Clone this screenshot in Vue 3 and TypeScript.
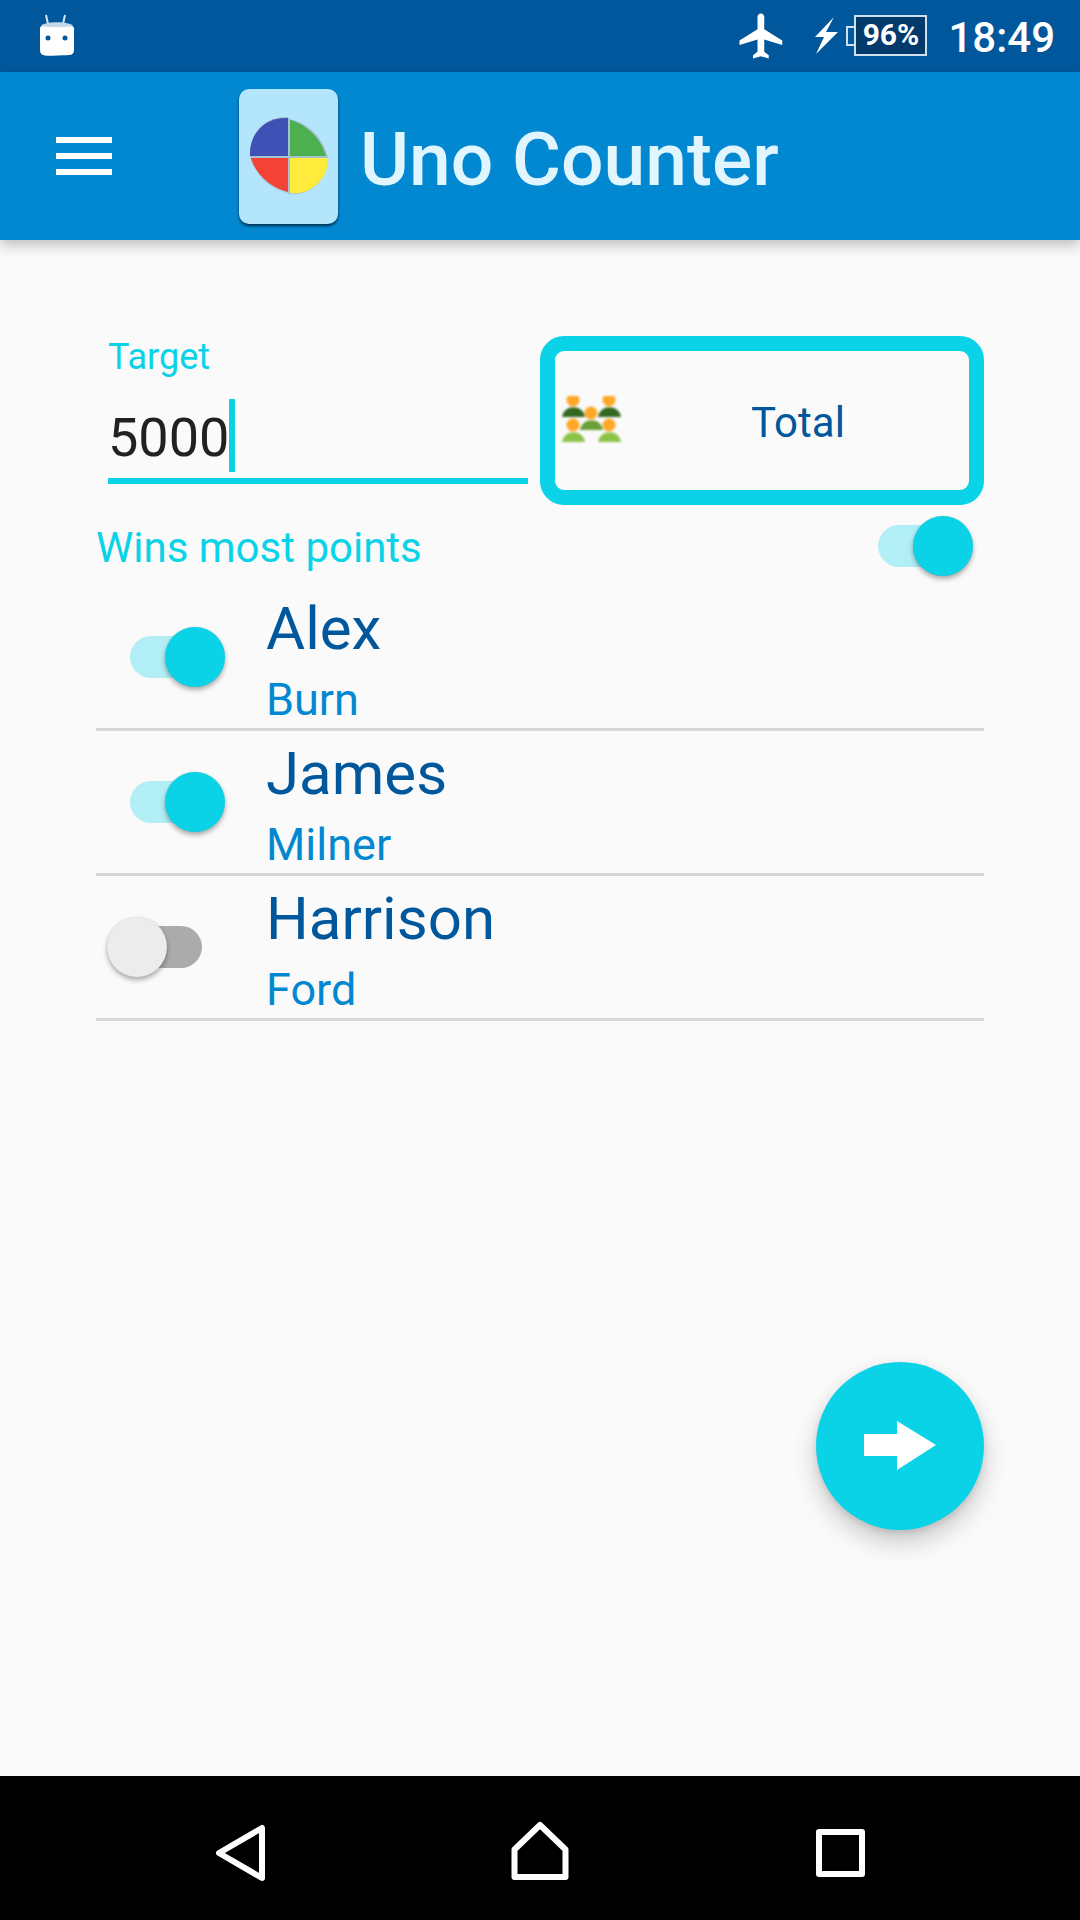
<script setup lang="ts">
interface Player {
  first: string
  last: string
  on: boolean
}

const players: Player[] = [
  { first: 'Alex', last: 'Burn', on: true },
  { first: 'James', last: 'Milner', on: true },
  { first: 'Harrison', last: 'Ford', on: false },
]
</script>

<template>
  <div class="screen">
    <header class="status">
      <svg class="robot" width="40" height="46" viewBox="37 12 40 46" aria-hidden="true">
        <path d="M46 13l2 9M65 13l-2 9" stroke="#fff" stroke-width="2" fill="none" opacity=".85" />
        <path d="M40 26c0-5 34-5 34 0v21c0 7-3 6-17 6.500s-17 .5-17-6.500z" fill="#fff" />
        <path d="M41 24c3-5 29-5 32 0-1 1.500-30 1.500-32 0z" fill="#c5d8e8" />
        <circle cx="48" cy="36" r="2.500" fill="#01579b" />
        <circle cx="65" cy="36" r="2.500" fill="#01579b" />
      </svg>
      <div class="status-right">
        <svg class="plane" width="54" height="54" viewBox="0 0 24 24" aria-hidden="true">
          <path fill="#fff" d="M21 16v-2l-8-5V3.500c0-.83-.67-1.500-1.500-1.500S10 2.670 10 3.500V9l-8 5v2l8-2.500V19l-2 1.500V22l3.500-1 3.500 1v-1.500L13 19v-5.500l8 2.500z" />
        </svg>
        <svg class="bolt" width="23" height="37" viewBox="816 17 23 37" aria-hidden="true">
          <path fill="#fff" d="M835 17l-19 20h9l-8 17 22-22h-12z" />
        </svg>
        <div class="battery">
          <span class="battery-tip"></span>
          <span class="battery-body">96%</span>
        </div>
        <span class="clock">18:49</span>
      </div>
    </header>

    <div class="appbar">
      <div class="burger"><i></i><i></i><i></i></div>
      <div class="logo">
        <svg width="99" height="135" viewBox="238 89 99 135" aria-hidden="true">
          <path d="M287 117c-25-1-39 18-38 40 5 18 20 32 38 36 1 2 2 2 2 1 22 2 39-17 38-37-5-20-20-34-38-38z" fill="#9fb4c2" opacity=".7" />
          <path fill="#3f51b5" d="M287 118v38h-38c-1-21 13-39 38-38z" />
          <path fill="#4caf50" d="M289 120c16 4 31 18 36 36h-36z" />
          <path fill="#f44336" d="M250 158h37v34c-17-4-32-17-37-34z" />
          <path fill="#ffeb3b" d="M289 158h38c1 20-17 38-38 35z" />
        </svg>
      </div>
      <h1 class="title">Uno Counter</h1>
    </div>

    <main class="content">
      <section class="top">
        <div class="field">
          <label class="field-label">Target</label>
          <div class="field-value">5000<span class="caret"></span></div>
        </div>
        <button class="total" type="button">
          <svg class="people" width="66" height="54" viewBox="558 398 66 54" aria-hidden="true">
            <circle cx="573" cy="402" r="6.500" fill="#ffa726" />
            <circle cx="609" cy="402" r="6.500" fill="#ffa726" />
            <path d="M562 419c2-13 21-13 23 0z" fill="#33691e" />
            <path d="M598 419c2-13 21-13 23 0z" fill="#33691e" />
            <circle cx="591" cy="415" r="6.500" fill="#ffa726" />
            <path d="M580 432c2-13 21-13 23 0z" fill="#689f38" />
            <circle cx="573" cy="427" r="6.500" fill="#ffa726" />
            <circle cx="609" cy="427" r="6.500" fill="#ffa726" />
            <path d="M562 444c2-13 21-13 23 0z" fill="#8bc34a" />
            <path d="M598 444c2-13 21-13 23 0z" fill="#8bc34a" />
          </svg>
          <span class="total-text">Total</span>
        </button>
      </section>

      <div class="wins">
        <span class="wins-text">Wins most points</span>
        <span class="switch on"><i class="knob"></i></span>
      </div>

      <div v-for="p in players" :key="p.first" class="player">
        <span class="switch" :class="{ on: p.on }"><i class="knob"></i></span>
        <div class="names">
          <div class="first">{{ p.first }}</div>
          <div class="last">{{ p.last }}</div>
        </div>
      </div>

      <button class="fab" type="button" aria-label="Next">
        <svg width="72" height="50" viewBox="864 1422 72 50" aria-hidden="true">
          <path fill="#fff" d="M864 1435h33v-13l39 24-39 25v-14h-33z" />
        </svg>
      </button>
    </main>

    <nav class="navbar">
      <svg width="56" height="62" viewBox="213 1822 56 62" aria-hidden="true">
        <path d="M262 1828v50l-43-25z" fill="none" stroke="#fff" stroke-width="6" stroke-linejoin="round" />
      </svg>
      <svg width="62" height="62" viewBox="509 1820 62 62" aria-hidden="true">
        <path d="M540 1825l25.500 24.500v27.500h-51v-27.500z" fill="none" stroke="#fff" stroke-width="6" stroke-linejoin="round" />
      </svg>
      <svg width="54" height="54" viewBox="813 1826 54 54" aria-hidden="true">
        <rect x="819" y="1832" width="43" height="42" fill="none" stroke="#fff" stroke-width="6" stroke-linejoin="round" />
      </svg>
    </nav>
  </div>
</template>

<style>
html,
body {
  margin: 0;
  padding: 0;
}
</style>

<style scoped>
.screen {
  width: 1080px;
  height: 1920px;
  display: flex;
  flex-direction: column;
  background: #fafafa;
  font-family: Roboto, "Liberation Sans", sans-serif;
  overflow: hidden;
}

.status {
  height: 72px;
  flex: none;
  display: flex;
  align-items: center;
  justify-content: space-between;
  background: #01579b;
  padding: 0 25px 0 37px;
  box-sizing: border-box;
  color: #fff;
}
.robot {
  margin-top: 2px;
}
.status-right {
  display: flex;
  align-items: center;
}
.bolt {
  margin-left: 26px;
  margin-top: -1px;
}
.battery {
  display: flex;
  align-items: center;
  margin-left: 8px;
  margin-top: -1px;
}
.battery-tip {
  width: 6px;
  height: 16px;
  border: 2px solid #cfe0ec;
  border-right: none;
}
.battery-body {
  width: 69px;
  height: 37px;
  border: 2px solid #cfe0ec;
  background: #013a6b;
  font-size: 30px;
  font-weight: 700;
  line-height: 36px;
  text-align: center;
}
.clock {
  margin-left: 21px;
  font-size: 42px;
  font-weight: 500;
  line-height: 72px;
  padding-top: 3px;
}

.appbar {
  height: 168px;
  flex: none;
  display: flex;
  align-items: center;
  background: #0288d1;
  padding-left: 56px;
  box-shadow: 0 6px 12px rgba(0, 0, 0, 0.22);
  position: relative;
  z-index: 1;
}
.burger {
  width: 56px;
  display: flex;
  flex-direction: column;
  gap: 10px;
}
.burger i {
  display: block;
  height: 6px;
  background: #fff;
}
.logo {
  width: 99px;
  height: 135px;
  margin-left: 127px;
  background: #b3e5fc;
  border-radius: 10px;
  box-shadow: 0 2px 3px rgba(0, 0, 0, 0.65);
}
.logo svg {
  display: block;
}
.title {
  margin: 6px 0 0 22px;
  font-size: 75px;
  font-weight: 500;
  line-height: 88px;
  color: #e1f5fe;
}

.content {
  flex: 1;
  position: relative;
  padding: 96px 96px 0;
}
.top {
  display: flex;
  height: 169px;
}
.field {
  width: 420px;
  margin-left: 12px;
  flex: none;
  height: 142px;
  border-bottom: 6px solid #0ad3e8;
}
.field-label {
  display: block;
  font-size: 36px;
  line-height: 42px;
  color: #0ad3e8;
}
.field-value {
  display: flex;
  align-items: flex-start;
  box-sizing: border-box;
  height: 100px;
  padding-top: 28px;
  font-size: 54px;
  line-height: 64px;
  color: #212121;
}
.caret {
  display: block;
  width: 6px;
  height: 73px;
  margin-top: -7px;
  background: #0ad3e8;
}
.total {
  width: 444px;
  height: 169px;
  margin-left: 12px;
  flex: none;
  box-sizing: border-box;
  display: flex;
  align-items: center;
  padding: 5px 0 0;
  border: 15px solid #0ad3e8;
  border-radius: 24px;
  background: #fafafa;
  font-family: inherit;
}
.people {
  margin-left: 3px;
  filter: blur(1px);
  flex: none;
}
.total-text {
  flex: 1;
  text-align: center;
  font-size: 42px;
  line-height: 50px;
  color: #01579b;
  padding-left: 3px;
}

.wins {
  height: 81px;
  display: flex;
  align-items: center;
  justify-content: space-between;
  padding-right: 34px;
}
.wins-text {
  font-size: 42px;
  line-height: 50px;
  color: #0ad3e8;
  padding-top: 4px;
}

.switch {
  position: relative;
  display: block;
  width: 72px;
  height: 42px;
  flex: none;
  border-radius: 21px;
  background: #ababab;
}
.switch.on {
  background: #b2eef6;
}
.knob {
  position: absolute;
  top: -9px;
  left: -23px;
  width: 60px;
  height: 60px;
  border-radius: 50%;
  background: #ececec;
  box-shadow: 0 3px 5px rgba(0, 0, 0, 0.32), 0 0 1px rgba(0, 0, 0, 0.15);
}
.switch.on .knob {
  left: 35px;
  background: #0ad3e8;
}

.player {
  height: 145px;
  box-sizing: border-box;
  border-bottom: 3px solid #d7d7d7;
  display: flex;
  align-items: center;
  padding-left: 34px;
}
.names {
  margin-left: 64px;
  padding-top: 6px;
}
.first {
  font-size: 60px;
  line-height: 70px;
  color: #01579b;
}
.last {
  font-size: 45px;
  line-height: 53px;
  margin-top: 9px;
  color: #0288d1;
}

.fab {
  position: absolute;
  left: 816px;
  top: 1122px;
  width: 168px;
  height: 168px;
  padding: 0;
  border: none;
  border-radius: 50%;
  background: #0ad3e8;
  display: flex;
  align-items: center;
  justify-content: center;
  box-shadow: 0 12px 24px rgba(0, 0, 0, 0.2), 0 3px 6px rgba(0, 0, 0, 0.1);
}

.navbar {
  height: 144px;
  flex: none;
  background: #000;
  position: relative;
}
.navbar svg {
  position: absolute;
}
.navbar svg:nth-child(1) {
  left: 213px;
  top: 46px;
}
.navbar svg:nth-child(2) {
  left: 509px;
  top: 44px;
}
.navbar svg:nth-child(3) {
  left: 813px;
  top: 50px;
}
</style>
